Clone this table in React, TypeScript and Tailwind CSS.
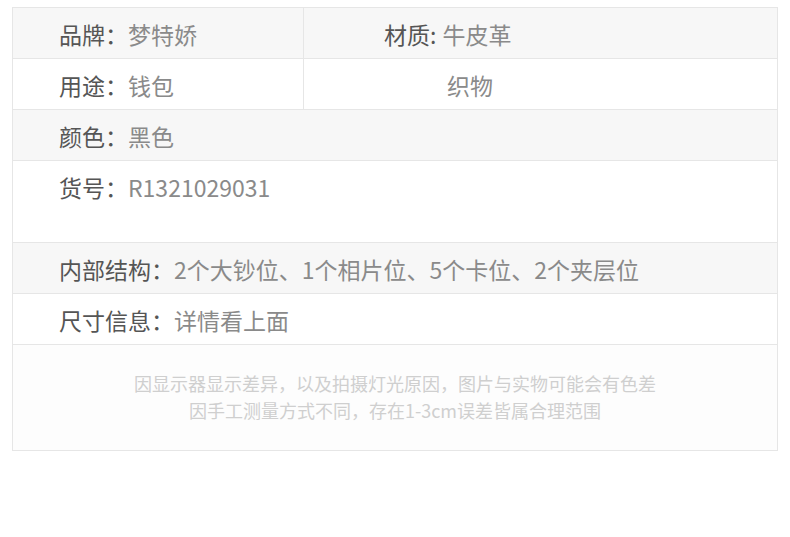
import React from "react";

const font = { fontFamily: '"Noto Sans CJK SC", "Noto Sans", sans-serif' };

function Row({ label, value, gray, tall }: { label: string; value: string; gray?: boolean; tall?: boolean }) {
  return (
    <div className={`flex border-b border-[#e6e6e6] ${gray ? "bg-[#f7f7f7]" : "bg-white"} ${tall ? "h-[82px]" : "h-[51px]"}`}>
      <div className="pl-[46px] pt-[12px] text-[23px] leading-[28px] whitespace-nowrap">
        <span className="text-[#555555]">{label}</span>
        <span className="text-[#8a8a8a]">{value}</span>
      </div>
    </div>
  );
}

export default function App() {
  return (
    <div className="w-[790px] h-[537px] bg-white pl-[12px] pt-[7px]" style={font}>
      <div className="w-[766px] border border-[#e6e6e6] border-b-0">
        <div className="flex h-[51px] border-b border-[#e6e6e6] bg-[#f7f7f7]">
          <div className="w-[291px] border-r border-[#e6e6e6] pl-[46px] pt-[12px] text-[23px] leading-[28px] whitespace-nowrap">
            <span className="text-[#555555]">品牌：</span>
            <span className="text-[#8a8a8a]">梦特娇</span>
          </div>
          <div className="flex-1 pl-[80px] pt-[12px] text-[23px] leading-[28px] whitespace-nowrap">
            <span className="text-[#555555] mr-[6px]">材质:</span>
            <span className="text-[#8a8a8a]">牛皮革</span>
          </div>
        </div>
        <div className="flex h-[51px] border-b border-[#e6e6e6] bg-white">
          <div className="w-[291px] border-r border-[#e6e6e6] pl-[46px] pt-[12px] text-[23px] leading-[28px] whitespace-nowrap">
            <span className="text-[#555555]">用途：</span>
            <span className="text-[#8a8a8a]">钱包</span>
          </div>
          <div className="flex-1 pl-[143px] pt-[12px] text-[23px] leading-[28px] whitespace-nowrap">
            <span className="text-[#8a8a8a]">织物</span>
          </div>
        </div>
        <Row label="颜色：" value="黑色" gray />
        <Row label="货号：" value="R1321029031" tall />
        <Row label="内部结构：" value="2个大钞位、1个相片位、5个卡位、2个夹层位" gray />
        <Row label="尺寸信息：" value="详情看上面" />
        <div className="h-[106px] border-b border-[#e6e6e6] bg-[#fdfdfd] pt-[25px] text-center text-[18px] leading-[27px] text-[#cfcfcf]">
          <div>因显示器显示差异，以及拍摄灯光原因，图片与实物可能会有色差</div>
          <div>因手工测量方式不同，存在1-3cm误差皆属合理范围</div>
        </div>
      </div>
    </div>
  );
}
